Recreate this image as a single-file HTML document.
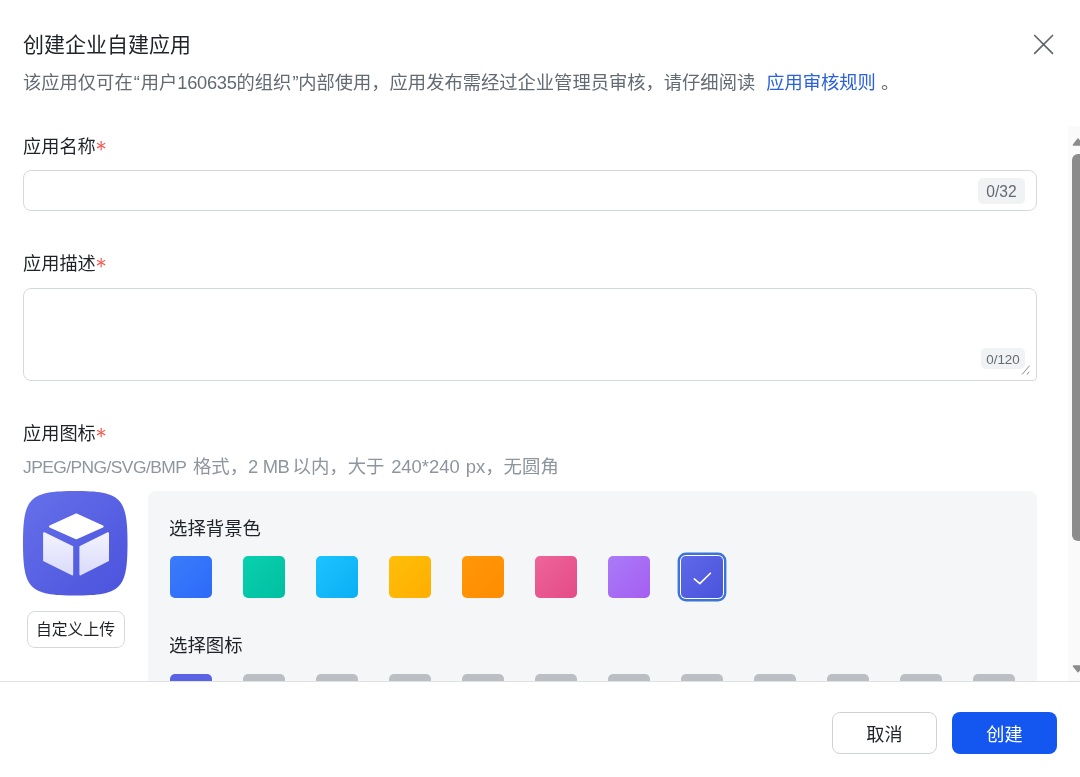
<!DOCTYPE html>
<html lang="zh-CN">
<head>
<meta charset="utf-8">
<title>创建企业自建应用</title>
<style>
html,body{margin:0;padding:0;}
body{width:1080px;height:777px;overflow:hidden;background:#fff;position:relative;
  font-family:"Liberation Sans","Noto Sans CJK SC",sans-serif;font-size:18.2px;color:#1f2329;}
*{box-sizing:border-box;}
button{font-family:inherit;margin:0;padding:0;display:block;cursor:pointer;}
.abs{position:absolute;white-space:nowrap;will-change:transform;}
.title{left:23px;top:30.3px;height:30px;line-height:30px;font-size:21px;color:#1f2329;}
.close{left:1031px;top:32px;width:25px;height:25px;}
.sub{left:23px;top:69px;height:28px;line-height:28px;color:#646a73;font-size:18.3px;}
.sub a{color:#2b62d9;text-decoration:none;margin:0 5px 0 11px;}
.sub i{font-style:normal;margin:0 1px;}
.sub b{font-weight:normal;letter-spacing:-0.3px;}
.label{left:23px;height:28px;line-height:28px;color:#1f2329;}
.req{color:#f5554f;font-family:"WenQuanYi Zen Hei","DejaVu Sans",sans-serif;font-size:22px;line-height:0;position:relative;top:2.8px;margin-left:-1.2px;}
.field{left:23px;width:1014px;border:1px solid #d6d9dc;border-radius:8px;background:#fff;}
.cnt{background:#f1f2f4;color:#646a73;border-radius:5px;text-align:center;}
.hint{left:23px;top:453px;height:28px;line-height:28px;color:#8f959e;font-size:18.4px;}
.hint b{font-weight:normal;font-size:17.4px;letter-spacing:-0.55px;margin-right:1.6px;}
.hint i{font-style:normal;}
.appicon{left:23.4px;top:490.8px;width:104.5px;height:104.5px;}
.upload{left:27px;top:611px;width:98px;height:37px;line-height:36px;border:1px solid #d6d9dc;border-radius:8px;
  font-size:15.8px;text-align:center;color:#1f2329;background:#fff;text-indent:-1px;}
.panel{left:148px;top:491px;width:889px;height:260px;background:#f5f6f7;border-radius:8px;}
.ptitle{left:169px;height:28px;line-height:28px;color:#1f2329;font-size:18.4px;}
.sw{top:556px;width:42px;height:42px;border-radius:5px;}
.tile{top:673.5px;width:42px;height:42px;border-radius:5px;background:#bbbfc4;}
.footer{left:0;top:680.8px;width:1080px;height:97px;background:#fff;border-top:1px solid #dee0e3;}
.btn{top:712px;width:105px;height:42px;line-height:44px;border-radius:8px;text-align:center;font-size:18.2px;}
.cancel{left:832px;border:1px solid #d0d3d6;color:#1f2329;background:#fff;}
.create{left:952px;background:#1456f0;color:#fff;line-height:46px;border:0;}
.sbtrack{left:1068px;top:126px;width:12px;height:555px;background:#fafafa;}
.sbthumb{left:1072px;top:154px;width:16px;height:386.5px;border-radius:6px;background:#8c8c8c;}
</style>
</head>
<body>
<div class="abs title">创建企业自建应用</div>
<svg class="abs close" viewBox="0 0 25 25"><path d="M3.7 3.5 L21.5 21.3 M21.5 3.5 L3.7 21.3" stroke="#62666b" stroke-width="1.7" stroke-linecap="round" fill="none"/></svg>
<div class="abs sub">该应用仅可在<i>“</i>用户<b>160635</b>的组织<i style="margin-right:-0.3px">”</i>内部使用，应用发布需经过企业管理员审核，请仔细阅读<a href="#">应用审核规则</a>。</div>

<div class="abs label" style="top:133px">应用名称<span class="req">*</span></div>
<div class="abs field" style="top:170px;height:41px"></div>
<div class="abs cnt" style="left:978px;top:178px;width:47px;height:26px;line-height:27.5px;font-size:15.6px">0/32</div>

<div class="abs label" style="top:250px">应用描述<span class="req">*</span></div>
<div class="abs field" style="top:288px;height:93px;border-bottom-right-radius:4px"></div>
<div class="abs cnt" style="left:981px;top:348px;width:44px;height:21px;line-height:24.5px;font-size:13.4px">0/120</div>
<svg class="abs" style="left:1020px;top:364px;width:12px;height:12px" viewBox="0 0 12 12"><path d="M2.2 10.4 L9.5 1.7 M7 10.5 L9.2 7.8" stroke="#8a8a8a" stroke-width="1" fill="none"/></svg>

<div class="abs label" style="top:419.5px">应用图标<span class="req">*</span></div>
<div class="abs hint"><b>JPEG/PNG/SVG/BMP</b> 格式，<i style="letter-spacing:-0.4px;margin-right:-2px">2 MB</i> 以内，大于 <i style="margin-left:1.5px">240*240</i> <i style="margin-left:1px">px</i>，无圆角</div>

<svg class="abs appicon" viewBox="0 0 104.5 104.5">
  <defs>
    <linearGradient id="ig" x1="0" y1="0" x2="1" y2="1"><stop offset="0" stop-color="#6670ea"/><stop offset="1" stop-color="#4a53dc"/></linearGradient>
    <linearGradient id="fg" x1="0" y1="0" x2="0" y2="1"><stop offset="0" stop-color="#f3f3ff"/><stop offset="1" stop-color="#d9dbfa"/></linearGradient>
  </defs>
  <path d="M104.5 52.25 C104.5 97.75 97.75 104.5 52.25 104.5 C6.75 104.5 0 97.75 0 52.25 C0 6.75 6.75 0 52.25 0 C97.75 0 104.5 6.75 104.5 52.25 Z" fill="url(#ig)"/>
  <path d="M53.3 23.4 L79.6 35.5 L53.3 47.3 L27 35.5 Z" fill="#fff" stroke="#fff" stroke-width="2" stroke-linejoin="round"/>
  <path d="M21.1 42.2 L49.2 55.8 L49.2 83.4 L21.1 69.4 Z" fill="url(#fg)" stroke="url(#fg)" stroke-width="2" stroke-linejoin="round"/>
  <path d="M85 42.2 L57.4 55.8 L57.4 83.4 L85 69.4 Z" fill="url(#fg)" stroke="url(#fg)" stroke-width="2" stroke-linejoin="round"/>
</svg>
<button type="button" class="abs upload">自定义上传</button>

<div class="abs panel"></div>
<div class="abs ptitle" style="top:514.5px">选择背景色</div>
<div class="abs sw" style="left:169.6px;background:linear-gradient(135deg,#3a7cfb,#2d6af8)"></div>
<div class="abs sw" style="left:242.6px;background:linear-gradient(135deg,#0ad0b0,#00bfa0)"></div>
<div class="abs sw" style="left:315.6px;background:linear-gradient(135deg,#1cc4ff,#0aaef5)"></div>
<div class="abs sw" style="left:388.6px;background:linear-gradient(135deg,#ffbe0a,#ffae00)"></div>
<div class="abs sw" style="left:461.6px;background:linear-gradient(135deg,#ff9808,#ff8c00)"></div>
<div class="abs sw" style="left:534.6px;background:linear-gradient(135deg,#ee6599,#e34b87)"></div>
<div class="abs sw" style="left:607.6px;background:linear-gradient(135deg,#a97bf8,#a55ef0)"></div>
<div class="abs sw" style="left:680.6px;background:linear-gradient(135deg,#5f68e8,#4a54dc);box-shadow:0 0 0 1px #fff,0 0 0 3.4px #3a73da"></div>
<svg class="abs" style="left:680.6px;top:556px;width:42px;height:42px" viewBox="0 0 42 42"><path d="M13.3 22.9 L18.8 27.6 L29.4 17.2" stroke="#fff" stroke-width="1.6" fill="none" stroke-linecap="round" stroke-linejoin="round"/></svg>

<div class="abs ptitle" style="top:631.7px">选择图标</div>
<div class="abs tile" style="left:169.6px;background:#5b63e4"></div>
<div class="abs tile" style="left:242.6px"></div>
<div class="abs tile" style="left:315.6px"></div>
<div class="abs tile" style="left:388.6px"></div>
<div class="abs tile" style="left:461.6px"></div>
<div class="abs tile" style="left:534.6px"></div>
<div class="abs tile" style="left:607.6px"></div>
<div class="abs tile" style="left:680.6px"></div>
<div class="abs tile" style="left:753.6px"></div>
<div class="abs tile" style="left:826.6px"></div>
<div class="abs tile" style="left:899.6px"></div>
<div class="abs tile" style="left:972.6px"></div>

<div class="abs sbtrack"></div>
<div class="abs sbthumb"></div>
<svg class="abs" style="left:1068px;top:134px;width:12px;height:16px" viewBox="0 0 12 16"><path d="M10 5 L14.6 11 L5.4 11 Z" fill="#8c8c8c" stroke="#8c8c8c" stroke-width="1.4" stroke-linejoin="round"/></svg>
<svg class="abs" style="left:1068px;top:660px;width:12px;height:16px" viewBox="0 0 12 16"><path d="M5.4 6 L14.6 6 L10 11.8 Z" fill="#8c8c8c" stroke="#8c8c8c" stroke-width="1.4" stroke-linejoin="round"/></svg>

<div class="abs footer"></div>
<button type="button" class="abs btn cancel">取消</button>
<button type="button" class="abs btn create">创建</button>
</body>
</html>
